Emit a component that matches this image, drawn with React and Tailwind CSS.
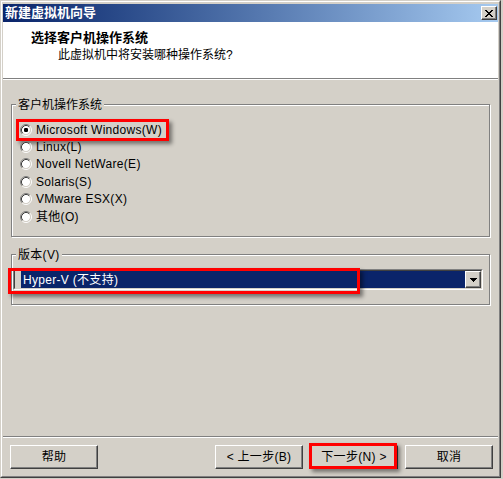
import React from "react";

const osList = [
  { label: "Microsoft Windows(W)", checked: true, marked: true },
  { label: "Linux(L)" },
  { label: "Novell NetWare(E)" },
  { label: "Solaris(S)" },
  { label: "VMware ESX(X)" },
  { label: "其他(O)" },
];

const raised =
  "border border-white border-r-[#404040] border-b-[#404040] shadow-[inset_-1px_-1px_0_#808080] bg-[#d4d0c8]";

function Radio({ checked }) {
  return (
    <svg width="12" height="12" viewBox="0 0 12 12" className="shrink-0">
      <circle cx="6" cy="6" r="4.2" fill="#fff" />
      <path d="M2.11 9.89A5.5 5.5 0 0 1 9.89 2.11" stroke="#808080" fill="none" />
      <path d="M9.89 2.11A5.5 5.5 0 0 1 2.11 9.89" stroke="#fff" fill="none" />
      <path d="M2.82 9.18A4.5 4.5 0 0 1 9.18 2.82" stroke="#404040" fill="none" />
      <path d="M9.18 2.82A4.5 4.5 0 0 1 2.82 9.18" stroke="#d4d0c8" fill="none" />
      {checked && <rect x="4" y="4" width="4" height="4" rx="1.2" fill="#000" />}
    </svg>
  );
}

function CloseGlyph() {
  const rows = [
    [0, 1, 6, 7],
    [1, 2, 5, 6],
    [2, 3, 4, 5],
    [3, 4],
    [2, 3, 4, 5],
    [1, 2, 5, 6],
    [0, 1, 6, 7],
  ];
  return (
    <svg width="8" height="7" viewBox="0 0 8 7" shapeRendering="crispEdges">
      {rows.map((cols, y) =>
        cols.map((x) => <rect key={`${x}-${y}`} x={x} y={y} width="1" height="1" fill="#000" />)
      )}
    </svg>
  );
}

function DownArrow() {
  return (
    <svg width="7" height="4" viewBox="0 0 7 4" shapeRendering="crispEdges">
      <rect x="0" y="0" width="7" height="1" fill="#000" />
      <rect x="1" y="1" width="5" height="1" fill="#000" />
      <rect x="2" y="2" width="3" height="1" fill="#000" />
      <rect x="3" y="3" width="1" height="1" fill="#000" />
    </svg>
  );
}

function Marker({ className }) {
  return (
    <span
      className={`pointer-events-none absolute border-[3px] border-[#ff0000] shadow-[3px_3px_4px_rgba(0,0,0,0.45)] ${className}`}
    />
  );
}

function Button({ children, marked }) {
  return (
    <div className="relative">
      <button
        type="button"
        className={`flex h-[24px] w-[88px] items-center justify-center tracking-[0.3px] text-black ${raised}`}
      >
        {children}
      </button>
      {marked && <Marker className="left-[-1px] top-[-2px] h-[26px] w-[88px]" />}
    </div>
  );
}

export default function App() {
  return (
    <div
      className="h-[479px] w-[503px] overflow-hidden bg-[#d4d0c8] text-[12px] leading-[14px] text-black"
      style={{ fontFamily: '"Liberation Sans", "Noto Sans CJK SC", sans-serif' }}
    >
      <div className="h-[478px] w-[501px] border border-[#d4d0c8] border-r-[#404040] border-b-[#404040]">
        <div className="flex h-full flex-col border border-white border-r-[#808080] border-b-[#808080] px-[1px] pt-[2px] pb-[1px]">
          {/* title bar */}
          <div className="flex h-[18px] items-center justify-between bg-gradient-to-r from-[#0a246a] to-[#a6caf0] pl-[2px] pr-[1px]">
            <span className="text-[13px] font-bold leading-[16px] text-white">新建虚拟机向导</span>
            <span className={`flex h-[14px] w-[16px] items-center justify-center ${raised}`}>
              <CloseGlyph />
            </span>
          </div>

          {/* header */}
          <div className="h-[56px] bg-white pt-[8px]">
            <div className="pl-[28px] text-[13px] font-bold leading-[16px]">选择客户机操作系统</div>
            <div className="mt-[1px] pl-[55px] leading-[16px]">此虚拟机中将安装哪种操作系统?</div>
          </div>
          <div className="h-[2px] border-t border-b border-t-[#808080] border-b-white" />

          {/* body */}
          <div className="flex flex-1 flex-col pt-[24px]">
            <div className="relative ml-[8px] h-[133px] w-[479px] border border-[#808080] pt-[16px] pl-[8px] shadow-[inset_1px_1px_0_#fff,1px_1px_0_#fff]">
              <span className="absolute left-[4px] top-[-7px] bg-[#d4d0c8] px-[2px]">客户机操作系统</span>
              {osList.map((os) => (
                <div key={os.label} className="relative flex h-[17.4px] items-center">
                  <Radio checked={os.checked} />
                  <span className="ml-[4px] tracking-[0.3px]">{os.label}</span>
                  {os.marked && <Marker className="left-[-4px] top-[-2px] h-[22px] w-[153px]" />}
                </div>
              ))}
            </div>

            <div className="relative mt-[17px] ml-[8px] h-[51px] w-[479px] border border-[#808080] pt-[14px] pl-[1px] shadow-[inset_1px_1px_0_#fff,1px_1px_0_#fff]">
              <span className="absolute left-[4px] top-[-7px] bg-[#d4d0c8] px-[2px] tracking-[0.3px]">版本(V)</span>
              <div className="relative h-[21px] w-[470px] border border-[#808080] border-r-white border-b-white">
                <div className="flex h-full border border-[#404040] border-r-[#d4d0c8] border-b-[#d4d0c8]">
                  <div className="w-[6px] bg-[#d4d0c8]" />
                  <div className="flex flex-1 items-center bg-[#0a246a] pl-[2px] tracking-[0.3px] text-white">
                    Hyper-V (不支持)
                  </div>
                  <div className={`flex w-[16px] items-center justify-center ${raised}`}>
                    <DownArrow />
                  </div>
                </div>
                <Marker className="left-[-6px] top-[-2px] h-[26px] w-[352px]" />
              </div>
            </div>

            <div className="flex-1" />
          </div>

          <div className="h-[2px] border-t border-b border-t-[#808080] border-b-white" />

          {/* buttons */}
          <div className="flex h-[37px] items-start pt-[7px] pr-[5px] pl-[7px]">
            <Button>帮助</Button>
            <div className="flex-1" />
            <div className="flex gap-[7px]">
              <Button>&lt; 上一步(B)</Button>
              <Button marked>下一步(N) &gt;</Button>
              <Button>取消</Button>
            </div>
          </div>
        </div>
      </div>
    </div>
  );
}
